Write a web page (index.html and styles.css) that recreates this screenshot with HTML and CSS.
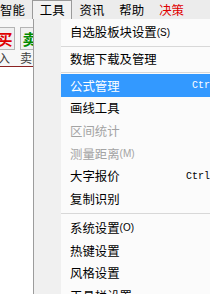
FILE: index.html
```html
<!DOCTYPE html>
<html>
<head>
<meta charset="utf-8">
<link rel="stylesheet" href="styles.css">
</head>
<body>
<div class="screen">
  <div class="menubar">
    <span class="mi">智能</span>
    <span class="mi open">工具</span>
    <span class="mi">资讯</span>
    <span class="mi">帮助</span>
    <span class="mi red">决策</span>
  </div>
  <div class="workspace">
    <div class="btnrow">
      <span class="btn buy">买</span>
      <span class="btn sell">卖</span>
    </div>
    <div class="labelrow">
      <span>买入</span>
      <span>卖出</span>
    </div>
    <div class="redline"></div>
  </div>
  <div class="dropdown">
    <div class="item"><span>自选股板块设置</span><span class="acc">(S)</span></div>
    <div class="sep"></div>
    <div class="item"><span>数据下载及管理</span></div>
    <div class="sep"></div>
    <div class="item hl"><span>公式管理</span><span class="key">Ctrl+F</span></div>
    <div class="item"><span>画线工具</span></div>
    <div class="item dis"><span>区间统计</span></div>
    <div class="item dis"><span>测量距离</span><span class="acc">(M)</span></div>
    <div class="item"><span>大字报价</span><span class="key">Ctrl+F1</span></div>
    <div class="item"><span>复制识别</span></div>
    <div class="sep big"></div>
    <div class="item"><span>系统设置</span><span class="acc">(O)</span></div>
    <div class="item"><span>热键设置</span></div>
    <div class="item"><span>风格设置</span></div>
    <div class="item"><span>工具栏设置</span></div>
  </div>
</div>
</body>
</html>
```

FILE: styles.css
```css
html, body {
  margin: 0;
  padding: 0;
  background: #ffffff;
}
.screen {
  position: relative;
  width: 210px;
  height: 294px;
  overflow: hidden;
  font-family: "Noto Sans CJK SC", "Noto Sans", sans-serif;
  font-size: 12.4px;
  color: #000;
}
.menubar {
  display: flex;
  height: 19px;
  background: #ececec;
  margin-left: -7.5px;
  box-sizing: border-box;
}
.mi {
  padding: 0 7.5px;
  line-height: 20px;
  height: 19px;
  box-sizing: border-box;
  white-space: nowrap;
}
.mi.open {
  border: 1px solid #9a9a9a;
  border-bottom: none;
  line-height: 18px;
  padding: 0 6.5px;
  background: #f2f2f2;
}
.mi.red {
  color: #e00000;
}
.workspace {
  height: 48px;
  background: #f7f7f7;
  display: flex;
  flex-direction: column;
}
.btnrow {
  display: flex;
  gap: 5px;
  margin-left: -5px;
  margin-top: 8px;
}
.btn {
  width: 20px;
  height: 23px;
  box-sizing: border-box;
  border: 1px solid #b4b4b4;
  background: #f0f0f0;
  font-weight: bold;
  font-size: 15px;
  line-height: 21px;
  text-align: center;
}
.btn.buy { color: #e00000; }
.btn.sell { color: #008a00; }
.labelrow {
  display: flex;
  gap: 10px;
  margin-left: -14px;
  margin-top: 1px;
  font-size: 12px;
  line-height: 14px;
  color: #404040;
  white-space: nowrap;
}
.redline {
  margin-top: auto;
  height: 1px;
  background: #8b2323;
}
.dropdown {
  position: absolute;
  left: 33px;
  top: 19px;
  width: 210px;
  bottom: 0;
  border-left: 1px solid #9c9c9c;
  background: linear-gradient(to right, #f0f0f0 27px, #fbfbfb 27px);
  padding-top: 2px;
}
.item {
  display: flex;
  align-items: center;
  height: 22.7px;
  margin-left: 27px;
  padding-left: 9px;
  padding-right: 16px;
  white-space: nowrap;
}
.item.hl {
  background: #3399ff;
  color: #fff;
}
.item.dis {
  color: #a3a3a3;
}
.acc {
  font-family: "Liberation Sans", sans-serif;
  font-size: 10px;
}
.key {
  margin-left: auto;
  font-family: "Liberation Mono", monospace;
  font-size: 10px;
}
.sep {
  height: 4px;
  margin-left: 27px;
  display: flex;
  flex-direction: column;
  justify-content: flex-end;
}
.sep::after {
  content: "";
  display: block;
  height: 1px;
  margin-bottom: 1px;
  background: #d8d8d8;
}
.sep.big {
  height: 6px;
  justify-content: center;
}
```
